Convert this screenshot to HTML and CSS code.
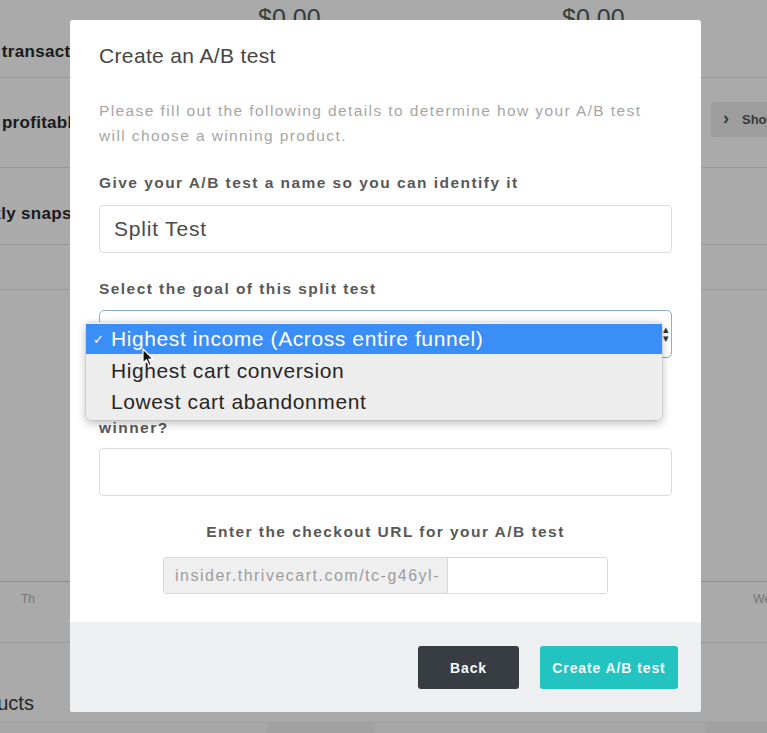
FILE: index.html
```html
<!DOCTYPE html>
<html lang="en">
<head>
<meta charset="utf-8">
<title>Create an A/B test</title>
<link rel="stylesheet" href="styles.css">
</head>
<body>
<div class="page">
  <section class="row row-stats">
    <div class="row-label">Total transactions</div>
    <div class="stat-value">$0.00</div>
    <div class="stat-value">$0.00</div>
  </section>
  <section class="row row-profit">
    <div class="row-label">Most profitable products</div>
    <div class="row-action"><span class="chev">&#x203A;</span> Show</div>
  </section>
  <section class="row row-snap">
    <div class="row-label">Weekly snapshot</div>
  </section>
  <section class="row row-empty"></section>
  <section class="chart"></section>
  <section class="axis">
    <span>Th</span>
    <span>We</span>
  </section>
  <section class="products">
    <div class="products-title">Products</div>
  </section>
  <section class="cards">
    <div class="card card-a"></div>
    <div class="card card-b"></div>
  </section>
</div>

<div class="overlay"></div>

<div class="modal">
  <div class="modal-body">
    <h2 class="modal-title">Create an A/B test</h2>
    <p class="intro">Please fill out the following details to determine how your A/B test will choose a winning product.</p>

    <label class="field-label">Give your A/B test a name so you can identify it</label>
    <div class="input">Split Test</div>

    <label class="field-label gap-a">Select the goal of this split test</label>
    <div class="select"><span class="arrows">&#x25B4;<br>&#x25BE;</span></div>

    <label class="field-label gap-b">How many visitors should we send before picking a<br>winner?</label>
    <div class="input"></div>

    <label class="field-label center gap-c">Enter the checkout URL for your A/B test</label>
    <div class="url-group">
      <span class="url-prefix">insider.thrivecart.com/tc-g46yl-</span>
      <span class="url-input"></span>
    </div>
  </div>
  <div class="modal-footer">
    <button class="btn btn-dark">Back</button>
    <button class="btn btn-teal">Create A/B test</button>
  </div>

  <ul class="menu">
    <li class="menu-item selected"><span class="check">&#x2713;</span>Highest income (Across entire funnel)</li>
    <li class="menu-item">Highest cart conversion</li>
    <li class="menu-item">Lowest cart abandonment</li>
  </ul>
  <svg class="cursor" width="12" height="19" viewBox="0 0 12 19" aria-hidden="true">
    <path d="M1 1 L1 15 L4.5 11.8 L7 17.5 L9.2 16.5 L6.8 11 L11 11 Z" fill="#111" stroke="#fff" stroke-width="1.2" stroke-linejoin="round"/>
  </svg>
</div>
</body>
</html>
```

FILE: styles.css
```css
* { box-sizing: border-box; }

html, body {
  margin: 0;
  padding: 0;
}

body {
  width: 767px;
  height: 733px;
  overflow: hidden;
  font-family: "Liberation Sans", Arial, sans-serif;
  background: #ffffff;
  position: relative;
}

/* ---------- background dashboard ---------- */
.page {
  width: 767px;
}

.row {
  display: flex;
  align-items: center;
  border-bottom: 1px solid #e4e4e4;
}

.row-label {
  flex-shrink: 0;
  margin-left: -44px;
  font-size: 17px;
  font-weight: bold;
  letter-spacing: 0.3px;
  color: #2b2b2b;
  white-space: nowrap;
  width: 302px;
}

.row-stats {
  height: 78px;
  align-items: flex-start;
}
.row-stats .row-label {
  margin-top: 42px;
}
.stat-value {
  flex-shrink: 0;
  font-size: 25px;
  color: #4f5d5c;
  margin-top: 4px;
  width: 304px;
}

.row-profit {
  height: 90px;
  justify-content: space-between;
}
.row-action {
  width: 56px;
  height: 35px;
  margin-top: -6px;
  background: #ececec;
  border-radius: 3px 0 0 3px;
  font-size: 13px;
  font-weight: bold;
  color: #555;
  display: flex;
  align-items: center;
  padding-left: 12px;
  gap: 13px;
  white-space: nowrap;
  overflow: hidden;
}
.chev { font-size: 18px; line-height: 1; margin-top: -3px; }

.row-snap {
  height: 77px;
  padding-top: 16px;
}

.row-empty {
  height: 45px;
}

.chart {
  height: 292px;
  border-bottom: 1px solid #cfcfcf;
}

.axis {
  height: 61px;
  display: flex;
  justify-content: space-between;
  padding: 10px 0 0 21px;
  font-size: 12px;
  color: #b3b3b3;
  border-bottom: 1px solid #e4e4e4;
}
.axis span:last-child { margin-right: -4px; }

.products {
  height: 78px;
  display: flex;
  align-items: flex-end;
  padding-bottom: 6px;
}
.products-title {
  margin-left: -45px;
  font-size: 20px;
  color: #3b3b3b;
}

.cards {
  height: 20px;
  background: #f2f2f2;
  display: flex;
}
.card { height: 20px; background: #fafafa; }
.card-a { width: 267px; }
.card-b { width: 330px; margin-left: 108px; }

/* ---------- overlay ---------- */
.overlay {
  position: absolute;
  inset: 0;
  background: rgba(0, 0, 0, 0.335);
}

/* ---------- modal ---------- */
.modal {
  position: absolute;
  left: 70px;
  top: 20px;
  width: 631px;
  height: 692px;
  background: #fff;
  border-radius: 3px;
  display: flex;
  flex-direction: column;
}

.modal-body {
  padding: 24px 29px 28px;
  display: flex;
  flex-direction: column;
  flex: 1;
}

.modal-title {
  margin: 0;
  font-size: 21px;
  line-height: 24px;
  font-weight: normal;
  letter-spacing: 0.35px;
  color: #454545;
}

.intro {
  margin: 30px 0 0;
  font-size: 15.5px;
  line-height: 25px;
  letter-spacing: 1.4px;
  color: #a6a6a6;
}

.field-label {
  display: block;
  margin-top: 25px;
  font-size: 15.5px;
  line-height: 20px;
  font-weight: bold;
  color: #585858;
  letter-spacing: 1.45px;
}
.field-label.gap-a { margin-top: 26px; }
.field-label.gap-b { margin-top: 40px; }
.field-label.gap-c { margin-top: 26px; }
.field-label.center { text-align: center; }

.input {
  margin-top: 12px;
  height: 48px;
  border: 1px solid #dcdcdc;
  border-radius: 4px;
  padding: 0 14px;
  display: flex;
  align-items: center;
  font-size: 21px;
  letter-spacing: 0.8px;
  color: #4a4a4a;
}
.gap-b + .input { margin-top: 10px; }

.select {
  margin-top: 11px;
  height: 48px;
  border: 1px solid #8aaed3;
  border-radius: 5px;
  display: flex;
  justify-content: flex-end;
  align-items: center;
  padding-right: 2px;
}
.arrows {
  font-size: 11px;
  line-height: 9px;
  color: #333;
  text-align: center;
}

.url-group {
  margin: 15px auto 0;
  width: 445px;
  height: 37px;
  display: flex;
  border: 1px solid #d9d9d9;
  border-radius: 3px;
  overflow: hidden;
}
.url-prefix {
  width: 284px;
  background: #efefef;
  border-right: 1px solid #d9d9d9;
  font-size: 16px;
  letter-spacing: 1.5px;
  color: #9d9d9d;
  display: flex;
  align-items: center;
  padding-left: 11px;
  white-space: nowrap;
  overflow: hidden;
}
.url-input {
  flex: 1;
  background: #fff;
}

.modal-footer {
  height: 90px;
  background: #edeff0;
  border-radius: 0 0 3px 3px;
  display: flex;
  justify-content: flex-end;
  align-items: flex-start;
  gap: 21px;
  padding: 24px 23px 0 0;
}

.btn {
  height: 43px;
  border: 0;
  border-radius: 3px;
  font-family: "Liberation Sans", Arial, sans-serif;
  font-size: 14px;
  font-weight: bold;
  letter-spacing: 0.9px;
  color: #f4fbfb;
  padding: 0;
}
.btn-dark { width: 101px; background: #373d42; }
.btn-teal { width: 138px; background: #22c3c1; }

/* ---------- native select popup ---------- */
.menu {
  position: absolute;
  left: 16px;
  top: 302px;
  width: 576px;
  margin: 0;
  padding: 2px 0 3px;
  list-style: none;
  background: #ededed;
  border-radius: 5px;
  box-shadow: 0 3px 10px rgba(0, 0, 0, 0.28), 0 0 0 1px rgba(0, 0, 0, 0.06);
}
.menu-item {
  height: 31px;
  display: flex;
  align-items: center;
  padding-left: 25px;
  font-size: 21px;
  letter-spacing: 0.6px;
  color: #262626;
  position: relative;
  white-space: nowrap;
}
.menu-item.selected {
  height: 30px;
  margin-bottom: 1px;
  background: #3b8ef5;
  color: #fff;
}
.check {
  position: absolute;
  left: 7px;
  font-size: 13px;
  top: 8px;
}

.cursor {
  position: absolute;
  left: 72px;
  top: 328px;
}
```
